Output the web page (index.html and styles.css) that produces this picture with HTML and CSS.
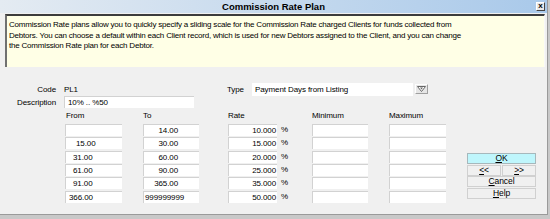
FILE: index.html
```html
<!DOCTYPE html>
<html lang="en">
<head>
  <meta charset="UTF-8" />
  <title>Commission Rate Plan</title>
  <link rel="stylesheet" href="styles.css">
</head>
<body>
  <div class="dialog">
    <div class="title-bar">
      <div class="title">Commission Rate Plan</div>
      <div class="close-btn">x</div>
    </div>

    <div class="info-panel">
      Commission Rate plans allow you to quickly specify a sliding scale for the Commission Rate charged Clients for funds collected from<br>
      Debtors. You can choose a default within each Client record, which is used for new Debtors assigned to the Client, and you can change<br>
      the Commission Rate plan for each Debtor.
    </div>

    <div class="form">
      <div class="line">
        <div class="label">Code</div>
        <div class="code-value">PL1</div>
        <div class="type-label">Type</div>
        <div class="select-box">Payment Days from Listing</div>
        <div class="drop-btn">
          <svg width="9" height="6" viewBox="0 0 9 6"><path d="M0.5 0.5 H8.5 L4.5 5.5 Z" fill="#fff" stroke="#666" stroke-width="1"/><path d="M3 1.5 H6 L4.5 3.5 Z" fill="#666"/></svg>
        </div>
      </div>

      <div class="line">
        <div class="label">Description</div>
        <div class="field desc-field">10% .. %50</div>
      </div>

      <div class="line heads">
        <div class="head head-from">From</div>
        <div class="head head-to">To</div>
        <div class="head head-rate">Rate</div>
        <div class="head head-min">Minimum</div>
        <div class="head head-max">Maximum</div>
      </div>

      <div class="table">
        <div class="rows" id="rows"></div>
        <div class="buttons">
          <button class="btn btn-ok"><u>O</u>K</button>
          <div class="btn-pair">
            <button class="btn"><u>&lt;</u>&lt;</button>
            <button class="btn"><u>&gt;</u>&gt;</button>
          </div>
          <button class="btn"><u>C</u>ancel</button>
          <button class="btn"><u>H</u>elp</button>
        </div>
      </div>
    </div>
  </div>

  <script>
    const plan = [
      { from: '', fromPad: 0, to: '14.00', rate: '10.000' },
      { from: '15.00', fromPad: 10, to: '30.00', rate: '15.000' },
      { from: '31.00', fromPad: 7, to: '60.00', rate: '20.000' },
      { from: '61.00', fromPad: 7, to: '90.00', rate: '25.000' },
      { from: '91.00', fromPad: 7, to: '365.00', rate: '35.000' },
      { from: '366.00', fromPad: 3, to: '999999999', rate: '50.000', toLeft: true },
    ];

    const rows = document.getElementById('rows');
    rows.innerHTML = plan.map(p => `
      <div class="row">
        <div class="field from-field" style="padding-left:${p.fromPad}px">${p.from}</div>
        <div class="field to-field${p.toLeft ? ' to-left' : ''}">${p.to}</div>
        <div class="field rate-field">${p.rate}</div>
        <div class="pct">%</div>
        <div class="field min-field"></div>
        <div class="field max-field"></div>
      </div>`).join('');
  </script>
</body>
</html>
```

FILE: styles.css
```css
* {
  margin: 0;
  padding: 0;
  box-sizing: border-box;
}

body {
  width: 550px;
  height: 219px;
  overflow: hidden;
  background: #c8c8c8;
  font-family: "Liberation Sans", Arial, sans-serif;
  font-size: 8px;
  letter-spacing: -0.1px;
  color: #000;
}

.dialog {
  width: 548px;
  height: 215px;
  background: #f0f0f0;
  border-right: 1px solid #9a9a9a;
  border-bottom: 1px solid #9a9a9a;
}

.title-bar {
  height: 13px;
  background: linear-gradient(to right, #e4ebf2, #a9c9ea);
  display: flex;
  justify-content: center;
  align-items: center;
  position: relative;
}

.title {
  font-weight: bold;
  font-size: 9.5px;
  letter-spacing: 0;
}

.close-btn {
  position: absolute;
  right: 2px;
  top: 2px;
  width: 9px;
  height: 9px;
  background: #e8e8e8;
  border: 1px solid #fff;
  border-right-color: #444;
  border-bottom-color: #444;
  font-size: 8px;
  font-weight: bold;
  line-height: 6px;
  text-align: center;
}

.info-panel {
  margin: 1px 2px 0 5px;
  height: 53px;
  background: #ffffe6;
  border-top: 2px solid #3c3c3c;
  border-left: 2px solid #707070;
  border-right: 1px solid #f8f8f8;
  padding: 4px 0 0 2px;
  line-height: 10.5px;
  letter-spacing: -0.2px;
}

.form {
  padding-top: 16px;
}

.line {
  display: flex;
  align-items: flex-start;
  height: 13px;
}

.label {
  width: 56px;
  text-align: right;
  padding-top: 2px;
}

.code-value {
  width: 163px;
  margin-left: 8px;
  padding-top: 2px;
}

.type-label {
  width: 25px;
  padding-top: 2px;
}

.select-box {
  width: 161px;
  height: 13px;
  background: #fff;
  padding: 2px 3px 0;
}

.drop-btn {
  width: 13px;
  height: 10px;
  margin: 1px 0 0 2px;
  background: #e6e6e6;
  border: 1px solid #fff;
  border-right-color: #a0a0a0;
  border-bottom-color: #a0a0a0;
  display: flex;
  justify-content: center;
  align-items: center;
}

.field {
  flex-shrink: 0;
  background: #fff;
  height: 12px;
  border-top: 1px solid #d2d2d2;
  border-left: 1px solid #d2d2d2;
  padding: 1px 2px 0 2px;
  line-height: 10px;
  white-space: nowrap;
}

.desc-field {
  width: 130px;
  margin-left: 8px;
  padding-left: 3px;
}

.heads {
  height: 15px;
  padding-top: 2px;
}

.head-from { margin-left: 66px; width: 77px; }
.head-to { width: 85px; }
.head-rate { width: 84px; }
.head-min { width: 77px; }

.table {
  display: flex;
}

.rows {
  display: flex;
  flex-direction: column;
  gap: 1.33px;
}

.row {
  display: flex;
  height: 12px;
}

.from-field {
  margin-left: 65px;
  width: 57px;
}

.to-field {
  margin-left: 21px;
  width: 56px;
  text-align: right;
  padding-right: 21px;
}

.to-field.to-left {
  text-align: left;
  padding-left: 1px;
}

.rate-field {
  margin-left: 29px;
  width: 49px;
  text-align: right;
  padding-right: 1px;
}

.pct {
  flex-shrink: 0;
  width: 35px;
  padding-left: 4px;
  padding-top: 1px;
}

.min-field { width: 56px; }

.max-field {
  margin-left: 21px;
  width: 57px;
}

.buttons {
  display: flex;
  flex-direction: column;
  margin: 29px 0 0 21px;
  gap: 0.5px;
}

.btn {
  height: 11px;
  width: 69px;
  font-family: inherit;
  font-size: 8.5px;
  letter-spacing: -0.1px;
  color: #000;
  background: #f0f0f0;
  border: 1px solid #d0d0d0;
  line-height: 9px;
  text-align: center;
}

.btn-ok {
  background: #bff6fc;
  border-color: #a6b8bc;
}

.btn-pair {
  display: flex;
  gap: 1px;
}

.btn-pair .btn {
  width: 34px;
}
```
